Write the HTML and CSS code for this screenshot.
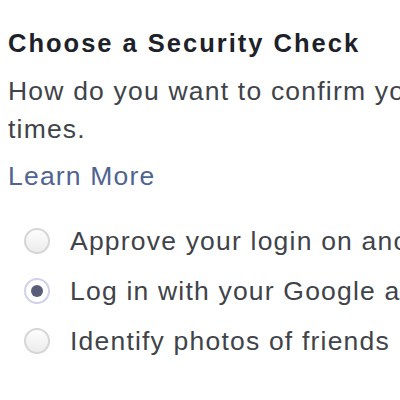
FILE: index.html
```html
<!DOCTYPE html>
<html lang="en">
<head>
  <meta charset="UTF-8" />
  <meta name="viewport" content="width=device-width, initial-scale=1" />
  <title>Choose a Security Check</title>
  <link rel="stylesheet" href="styles.css">
</head>
<body>
  <div class="check">
    <h2>Choose a Security Check</h2>
    <p class="intro">How do you want to confirm your identity? You can only try each option a few<br>times.</p>
    <a class="learn" href="#">Learn More</a>

    <ul class="options">
      <li><span class="radio"></span>Approve your login on another device</li>
      <li><span class="radio checked"></span>Log in with your Google account</li>
      <li><span class="radio"></span>Identify photos of friends</li>
    </ul>
  </div>
</body>
</html>
```

FILE: styles.css
```css
html, body {
  overflow: hidden;
}
body {
  margin: 0;
  padding: 28px 0 0 8px;
  background: #fff;
  font-family: "Liberation Sans", Arial, sans-serif;
  font-size: 26.5px;
  letter-spacing: 1.2px;
  color: #3f434a;
  white-space: nowrap;
}
h2 {
  margin: 0;
  font-size: 25.5px;
  line-height: 30px;
  letter-spacing: 2px;
  color: #1d2129;
}
.intro {
  margin: 14px 0 0;
  line-height: 38px;
}
.learn {
  display: block;
  margin-top: 9px;
  line-height: 38px;
  color: #4f6490;
  text-decoration: none;
}
.options {
  list-style: none;
  margin: 21px 0 0;
  padding: 0 0 0 16px;
}
.options li {
  display: flex;
  align-items: center;
  gap: 20px;
  height: 50px;
}
.radio {
  flex: none;
  box-sizing: border-box;
  width: 26px;
  height: 26px;
  border: 2px solid #d6d6d6;
  border-radius: 50%;
  background: linear-gradient(#fdfdfd, #ececec);
  position: relative;
}
.radio.checked {
  border-color: #cfd0ec;
  background: #fff;
}
.radio.checked::after {
  content: "";
  position: absolute;
  left: 5px;
  top: 5px;
  width: 12px;
  height: 12px;
  border-radius: 50%;
  background: #5a5d78;
}
```
